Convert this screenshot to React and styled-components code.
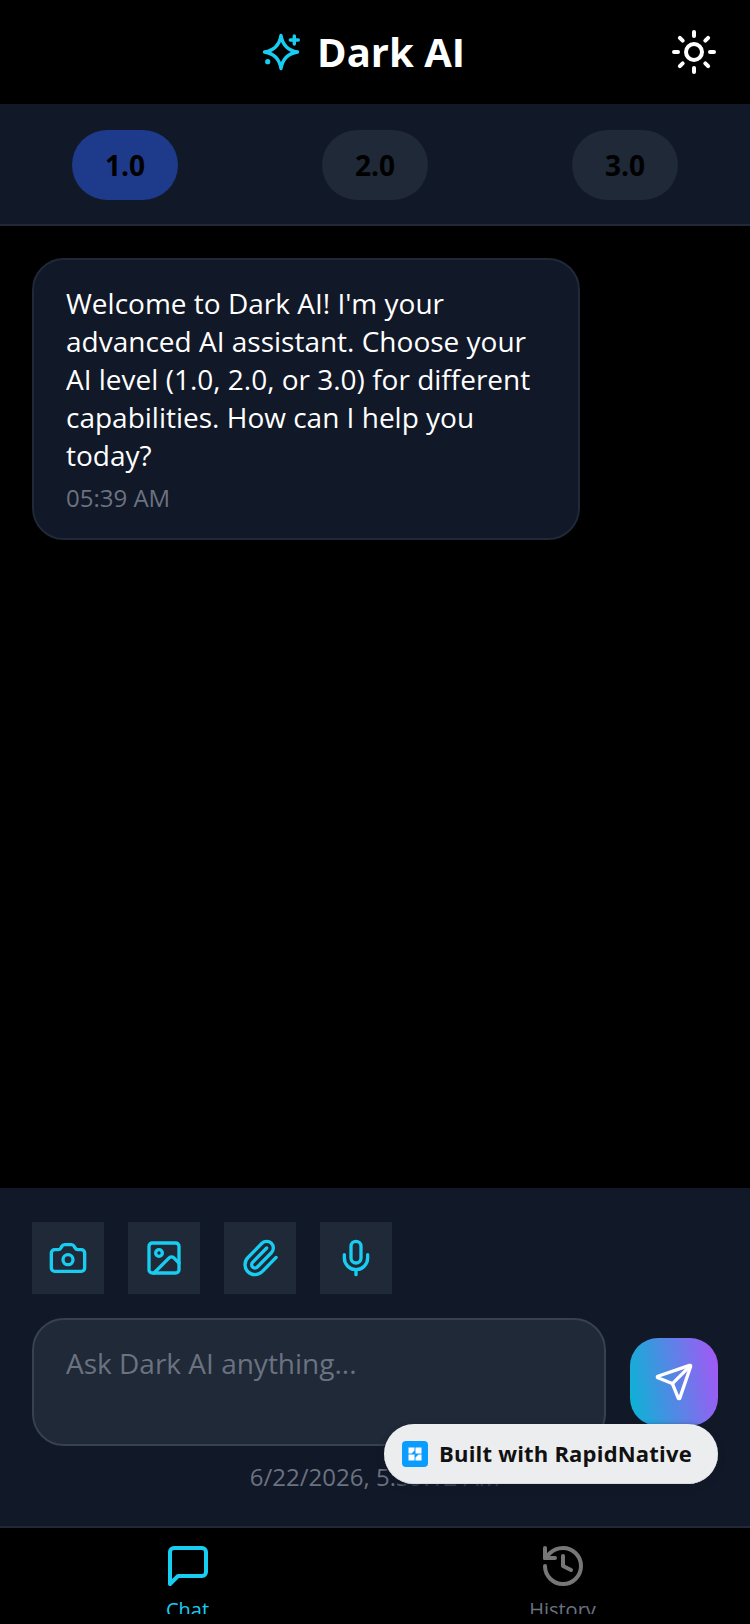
import React from 'react';
import styled, { createGlobalStyle } from 'styled-components';
import { Camera, History, Image, Mic, Paperclip, Send, Sun } from 'lucide-react';

const GlobalStyle = createGlobalStyle`
  html, body {
    margin: 0;
    padding: 0;
    background: #000;
  }
  * {
    box-sizing: border-box;
  }
`;

const CYAN = '#18cdf2';
const levels = ['1.0', '2.0', '3.0'];
const tools = [Camera, Image, Paperclip, Mic];

// four point star with the small plus and dot, lucide's Sparkles has a tilted star
const StarLogo = () => (
  <svg width="40" height="40" viewBox="0 0 40 40" fill="none" stroke={CYAN} strokeWidth="3.4" strokeLinecap="round" strokeLinejoin="round">
    <path d="M20 3.5C21.5 13 27 18.5 36.5 20C27 21.5 21.5 27 20 36.5C18.5 27 13 21.5 3.5 20C13 18.5 18.5 13 20 3.5Z" />
    <path d="M33.3 4v8M29.3 8h8" />
    <circle cx="6.7" cy="29.7" r="2.6" fill={CYAN} stroke="none" />
  </svg>
);

const ChatIcon = () => (
  <svg width="48" height="48" viewBox="0 0 24 24" fill="none" stroke={CYAN} strokeWidth="2" strokeLinecap="round" strokeLinejoin="round">
    <path d="M21 15a2 2 0 0 1-2 2H7l-4 4V5a2 2 0 0 1 2-2h14a2 2 0 0 1 2 2z" />
  </svg>
);

const App = () => (
  <Screen>
    <GlobalStyle />
    <Header>
      <Brand>
        <StarLogo />
        <Title>Dark AI</Title>
      </Brand>
      <ThemeButton>
        <Sun size={48} color="#fff" strokeWidth={2} />
      </ThemeButton>
    </Header>

    <LevelBar>
      {levels.map((level, index) => (
        <LevelPill key={level} active={index === 0}>{level}</LevelPill>
      ))}
    </LevelBar>

    <Messages>
      <Bubble>
        <BubbleText>
          Welcome to Dark AI! I'm your advanced AI assistant. Choose your AI level (1.0, 2.0, or 3.0) for different capabilities. How can I help you today?
        </BubbleText>
        <BubbleTime>05:39 AM</BubbleTime>
      </Bubble>
    </Messages>

    <Composer>
      <ToolRow>
        {tools.map((ToolIcon, index) => (
          <ToolButton key={index}>
            <ToolIcon size={40} color={CYAN} strokeWidth={2} />
          </ToolButton>
        ))}
      </ToolRow>
      <InputRow>
        <InputBox>Ask Dark AI anything...</InputBox>
        <SendButton>
          <Send size={40} color="#fff" strokeWidth={2} />
        </SendButton>
      </InputRow>
      <DateLine>6/22/2026, 5:39:12 AM</DateLine>
    </Composer>

    <TabBar>
      <TabClip>
        <Tab>
          <ChatIcon />
          <TabLabel active>Chat</TabLabel>
        </Tab>
        <Tab>
          <History size={48} color="#777" strokeWidth={2} />
          <TabLabel>History</TabLabel>
        </Tab>
      </TabClip>
    </TabBar>

    <BuiltBadge>
      <BadgeLogo viewBox="0 0 26 26">
        <rect width="26" height="26" rx="4" fill="#0a9dff" />
        <path d="M6.5 6.5h6v3l-3 3h-3zM13.5 6.5h6v6h-6zM6.5 13.5h6v6h-6zM16.5 13.5h3v6h-6v-3z" fill="#fff" />
      </BadgeLogo>
      <BadgeText>Built with RapidNative</BadgeText>
    </BuiltBadge>
  </Screen>
);

export default App;

const Screen = styled.div`
  position: relative;
  width: 750px;
  height: 1624px;
  display: flex;
  flex-direction: column;
  overflow: hidden;
  background: #000;
  font-family: "Open Sans", "Noto Sans", sans-serif;
`;

const Header = styled.header`
  position: relative;
  height: 104px;
  flex: none;
  display: flex;
  align-items: center;
  justify-content: center;
  padding-right: 24px;
`;

const Brand = styled.div`
  display: flex;
  align-items: center;
  gap: 16px;
`;

const Title = styled.h1`
  margin: 0;
  color: #fff;
  font-size: 40px;
  line-height: 48px;
  font-weight: 700;
`;

const ThemeButton = styled.div`
  position: absolute;
  right: 32px;
  top: 28px;
  display: flex;
`;

const LevelBar = styled.div`
  height: 122px;
  flex: none;
  display: flex;
  justify-content: space-around;
  padding-top: 26px;
  background: #111827;
  border-bottom: 2px solid #1f2937;
`;

const LevelPill = styled.div`
  width: 106px;
  height: 70px;
  border-radius: 35px;
  display: flex;
  align-items: center;
  justify-content: center;
  background: ${({ active }) => (active ? '#1e3a8a' : '#1f2937')};
  color: #000;
  font-size: 28px;
  font-weight: 700;
`;

const Messages = styled.main`
  flex: 1;
  padding: 32px;
`;

const Bubble = styled.div`
  width: 548px;
  height: 282px;
  padding: 24px 32px;
  border-radius: 32px;
  background: #111827;
  border: 2px solid #1f2937;
`;

const BubbleText = styled.p`
  margin: 0;
  color: #fff;
  font-size: 28px;
  line-height: 38px;
`;

const BubbleTime = styled.div`
  margin-top: 8px;
  color: #6b7280;
  font-size: 24px;
  line-height: 32px;
`;

const Composer = styled.section`
  height: 338px;
  flex: none;
  padding: 34px 32px 0;
  background: #111827;
`;

const ToolRow = styled.div`
  display: flex;
  gap: 24px;
`;

const ToolButton = styled.div`
  width: 72px;
  height: 72px;
  display: flex;
  align-items: center;
  justify-content: center;
  background: #1f2937;
`;

const InputRow = styled.div`
  display: flex;
  align-items: flex-end;
  gap: 24px;
  margin-top: 24px;
`;

const InputBox = styled.div`
  flex: 1;
  height: 128px;
  padding: 24px 32px;
  border-radius: 32px;
  background: #1f2937;
  border: 2px solid #374151;
  color: #6b7280;
  font-size: 28px;
  line-height: 38px;
`;

const SendButton = styled.div`
  width: 88px;
  height: 88px;
  flex: none;
  margin-bottom: 20px;
  border-radius: 28px;
  display: flex;
  align-items: center;
  justify-content: center;
  background: linear-gradient(80deg, #06b6d4, #a855f7);
`;

const DateLine = styled.div`
  margin-top: 15px;
  text-align: center;
  color: #6b7280;
  font-size: 24px;
  line-height: 32px;
`;

const TabBar = styled.nav`
  height: 98px;
  flex: none;
  padding-bottom: 10px;
  background: #000;
  border-top: 2px solid #1f2937;
`;

const TabClip = styled.div`
  height: 100%;
  display: flex;
  overflow: hidden;
`;

const Tab = styled.div`
  flex: 1;
  display: flex;
  flex-direction: column;
  align-items: center;
  padding-top: 14px;

  svg {
    flex: none;
  }
`;

const TabLabel = styled.span`
  margin-top: 6px;
  color: ${({ active }) => (active ? CYAN : '#6b7280')};
  font-size: 20px;
  line-height: 28px;
`;

const BuiltBadge = styled.div`
  position: absolute;
  left: 384px;
  top: 1424px;
  width: 334px;
  height: 60px;
  display: flex;
  align-items: center;
  gap: 11px;
  padding-left: 18px;
  border-radius: 30px;
  background: #ecedef;
  box-shadow: inset 0 -1px 0 #d8dbe0, 0 3px 6px rgba(17, 24, 39, 0.9);
`;

const BadgeLogo = styled.svg`
  width: 26px;
  height: 26px;
  flex: none;
`;

const BadgeText = styled.span`
  margin-bottom: 2px;
  color: #111;
  font-size: 22px;
  font-weight: 700;
  letter-spacing: 0.2px;
  white-space: nowrap;
`;
